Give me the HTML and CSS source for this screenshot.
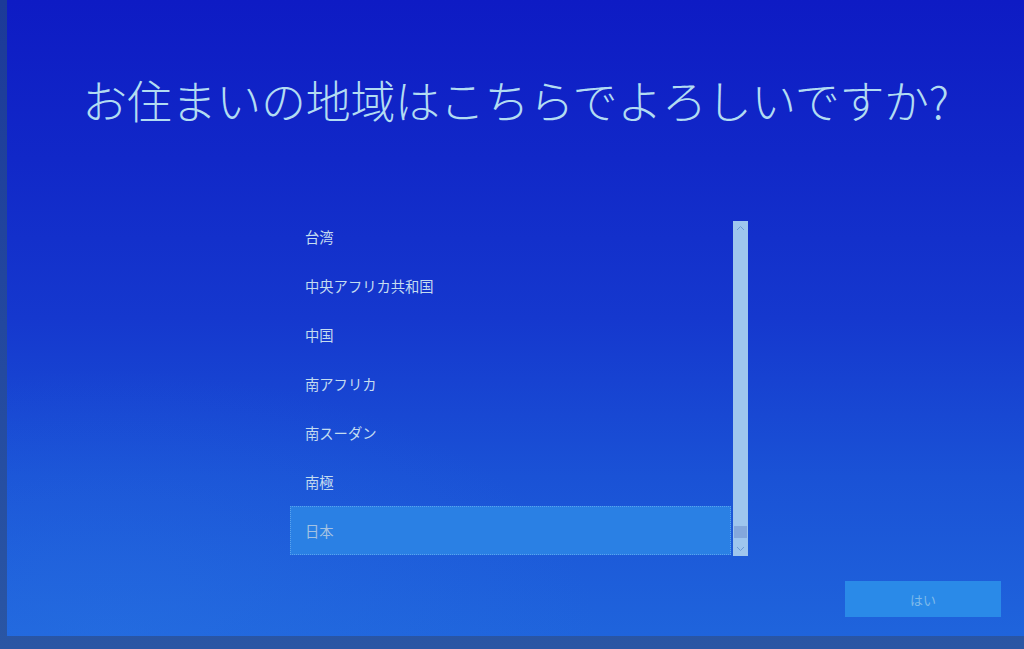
FILE: index.html
```html
<!DOCTYPE html>
<html lang="ja">
<head>
  <meta charset="UTF-8">
  <meta name="viewport" content="width=device-width, initial-scale=1.0">
  <title>地域</title>
  <link rel="stylesheet" href="styles.css">
</head>
<body>
  <div class="screen">
    <h1 class="title">お住まいの地域はこちらでよろしいですか?</h1>

    <div class="region-box">
      <ul class="region-list">
        <li>台湾</li>
        <li>中央アフリカ共和国</li>
        <li>中国</li>
        <li>南アフリカ</li>
        <li>南スーダン</li>
        <li>南極</li>
        <li class="selected">日本</li>
      </ul>
      <div class="scrollbar">
        <svg class="arrow" width="9" height="6" viewBox="0 0 9 6"><path d="M1 5 L4.5 1.5 L8 5" fill="none" stroke="#6c9ad6" stroke-width="1"/></svg>
        <div class="track"></div>
        <div class="thumb"></div>
        <svg class="arrow" width="9" height="6" viewBox="0 0 9 6"><path d="M1 1 L4.5 4.5 L8 1" fill="none" stroke="#6c9ad6" stroke-width="1"/></svg>
      </div>
    </div>

    <div class="actions">
      <button class="yes">はい</button>
    </div>
  </div>
</body>
</html>
```

FILE: styles.css
```css
html, body {
  margin: 0;
  padding: 0;
}
body {
  width: 1024px;
  height: 649px;
  background: linear-gradient(to bottom, #1c3a98 0%, #2a56a4 100%);
  overflow: hidden;
  font-family: "Noto Sans CJK JP", "Noto Sans", sans-serif;
}
.screen {
  margin-left: 7px;
  height: 636px;
  display: flex;
  flex-direction: column;
  background:
    radial-gradient(ellipse 700px 380px at 10% 100%, rgba(44, 120, 230, 0.35), rgba(44, 120, 230, 0) 70%),
    linear-gradient(to bottom, #0e1bc4 0%, #1128c8 25%, #1538ce 50%, #1a52d6 75%, #1f64dc 100%);
}
.title {
  margin: 73px 0 0;
  text-align: center;
  font-size: 45px;
  line-height: 54px;
  font-weight: 300;
  color: #b2dcf2;
  letter-spacing: -0.3px;
}
.region-box {
  display: flex;
  width: 458px;
  height: 344px;
  margin: 85px 0 0 283px;
  gap: 2px;
}
.region-list {
  list-style: none;
  margin: 0;
  padding: 0;
  width: 441px;
}
.region-list li {
  height: 49px;
  line-height: 49px;
  padding-left: 15px;
  font-size: 14.3px;
  color: #c4dcf0;
  box-sizing: border-box;
}
.region-list li.selected {
  background: #2a80e4;
  border: 1px dotted #5aa2ee;
  padding-left: 14px;
  line-height: 47px;
  color: #a4c2e2;
}
.scrollbar {
  width: 15px;
  margin-top: 9px;
  height: 335px;
  background: #9ec6ee;
  display: flex;
  flex-direction: column;
  align-items: center;
}
.arrow {
  margin: 4px 0;
  flex: none;
}
.track {
  flex: 1;
}
.thumb {
  width: 13px;
  height: 12px;
  margin-bottom: 4px;
  background: #84a8dc;
}
.actions {
  display: flex;
  justify-content: flex-end;
  padding-right: 23px;
  margin-top: 25px;
}
.yes {
  width: 156px;
  height: 36px;
  border: none;
  background: #2a8ae8;
  color: #7ebaea;
  font-family: "Noto Sans CJK JP", "Noto Sans", sans-serif;
  font-size: 13px;
  padding: 0;
}
```
